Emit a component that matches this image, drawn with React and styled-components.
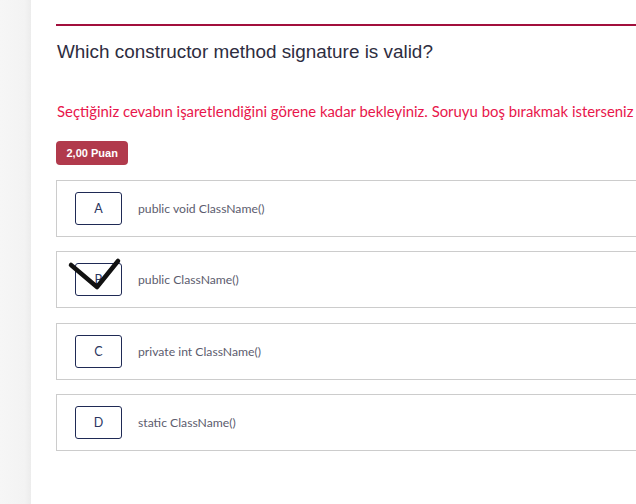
import React from 'react';
import styled, { createGlobalStyle } from 'styled-components';

const GlobalStyle = createGlobalStyle`
    html, body {
        margin: 0;
        padding: 0;
        background: #ffffff;
    }
    body {
        width: 636px;
        height: 504px;
        overflow: hidden;
    }
`;

const Page = styled.div`
    display: flex;
    height: 504px;
    overflow: hidden;
`;

const Sidebar = styled.aside`
    flex: 0 0 31px;
    background: linear-gradient(to right, #f6f6f6 0%, #f3f3f3 80%, #ececec 100%);
`;

const Main = styled.main`
    flex: 0 0 720px;
    padding: 24px 0 0 25px;
`;

const Rule = styled.div`
    height: 2px;
    background: #a20f3c;
`;

const Title = styled.h2`
    margin: 13px 0 0 1px;
    font-family: "Liberation Sans", Arial, sans-serif;
    font-size: 18.9px;
    font-weight: 400;
    line-height: 26px;
    color: #2e2d3f;
`;

const Warning = styled.p`
    margin: 37px 0 0 1px;
    font-family: Lato, "Noto Sans", sans-serif;
    font-size: 14.9px;
    line-height: 18px;
    color: #e8164b;
    white-space: nowrap;
`;

const Badge = styled.span`
    display: inline-flex;
    align-items: center;
    justify-content: center;
    margin-top: 21px;
    height: 24px;
    padding: 0 10.5px;
    border-radius: 4px;
    background: #b13a4c;
    color: #ffffff;
    font-family: "Liberation Sans", Arial, sans-serif;
    font-size: 11px;
    font-weight: 700;
`;

const Options = styled.div`
    display: flex;
    flex-direction: column;
    gap: 14.33px;
    margin-top: 15px;
`;

const Option = styled.div`
    position: relative;
    display: flex;
    align-items: center;
    height: 55px;
    padding-left: 18px;
    border: 1px solid #cccccc;
    cursor: pointer;
`;

const Letter = styled.div`
    display: flex;
    align-items: center;
    justify-content: center;
    width: 45px;
    height: 31px;
    border: 1px solid #1f2a55;
    border-radius: 3px;
    font-family: Lato, "Noto Sans", sans-serif;
    font-size: 12.5px;
    color: #2a3560;
`;

const Text = styled.span`
    margin-left: 16px;
    font-family: Lato, "Noto Sans", sans-serif;
    font-size: 12.2px;
    color: #5c5c6e;
`;

const Tick = styled.svg`
    position: absolute;
    left: 0;
    top: 0;
    width: 70px;
    height: 45px;
    overflow: visible;
`;

const options = [
    { key: 'A', text: 'public void ClassName()' },
    { key: 'B', text: 'public ClassName()', checked: true },
    { key: 'C', text: 'private int ClassName()' },
    { key: 'D', text: 'static ClassName()' },
];

const App = () => (
    <>
        <GlobalStyle />
        <Page>
            <Sidebar />
            <Main>
                <Rule />
                <Title>Which constructor method signature is valid?</Title>
                <Warning>
                    Seçtiğiniz cevabın işaretlendiğini görene kadar bekleyiniz. Soruyu boş bırakmak isterseniz işaretli şıkka tekrar tıklayınız.
                </Warning>
                <Badge>2,00 Puan</Badge>
                <Options>
                    {options.map((option) => (
                        <Option key={option.key}>
                            <Letter>{option.key}</Letter>
                            <Text>{option.text}</Text>
                            {option.checked ? (
                                <Tick viewBox="0 0 70 45">
                                    <path
                                        d="M14 13 L40 35 L61 9"
                                        fill="none"
                                        stroke="#111"
                                        strokeWidth="4.5"
                                        strokeLinecap="round"
                                        strokeLinejoin="round"
                                    />
                                </Tick>
                            ) : null}
                        </Option>
                    ))}
                </Options>
            </Main>
        </Page>
    </>
);

export default App;
